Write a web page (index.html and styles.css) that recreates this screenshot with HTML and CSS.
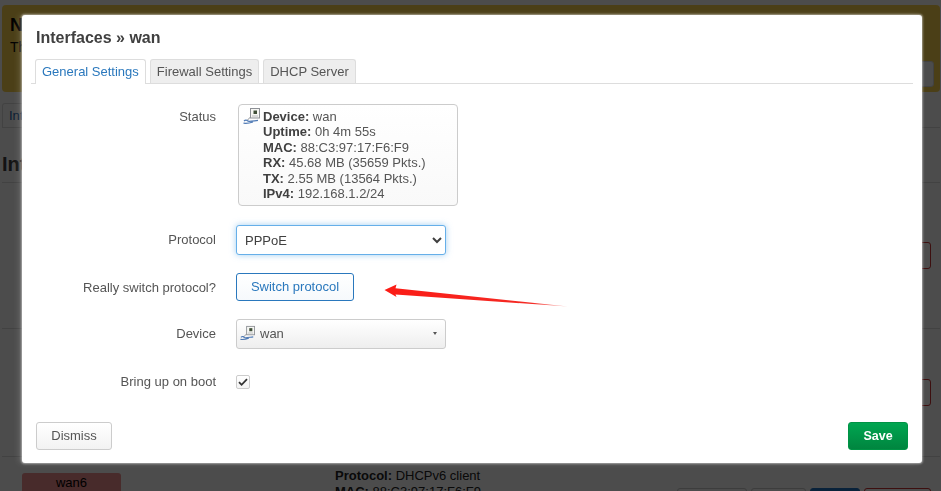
FILE: index.html
```html
<!DOCTYPE html>
<html lang="en">
<head>
<meta charset="utf-8">
<title>Interfaces » wan</title>
<link rel="stylesheet" href="styles.css">
</head>
<body>
<svg class="defs" width="0" height="0" aria-hidden="true">
  <symbol id="netdev" viewBox="0 0 17 16">
    <rect x="7.5" y="0.5" width="9" height="9.5" fill="#f6f6f3" stroke="#8d9095"/>
    <rect x="10.5" y="2.5" width="3.5" height="3.5" fill="#3f4f38"/>
    <rect x="9" y="7.5" width="6" height="1" fill="#b9bcc0"/>
    <path d="M7.5 9 4 12.5" fill="none" stroke="#8d9095" stroke-width="1"/>
    <path d="M1 13c1.500-1.500 3-1 4 .2 2 .5 5-.2 10-.8M.5 15.200c3 .4 6 0 9.500-1.200" fill="none" stroke="#4f7ab5" stroke-width="1.200"/>
  </symbol>
</svg>

<div class="page">
  <div class="alert">
    <div class="alert-text">
      <strong>Network device is not present</strong>
      <p>The interface configuration has changes.</p>
    </div>
    <button class="btn alert-btn" type="button">Continue</button>
  </div>
  <div class="page-tabs"><a class="page-tab">Interfaces</a></div>
  <h2 class="page-title">Interfaces</h2>
  <div class="if-row if-lan">
    <div class="badge badge-plain">lan</div>
    <div class="if-info"><b>Protocol:</b> Static address</div>
    <div class="if-actions">
      <button class="btn a-restart" type="button">Restart</button>
      <button class="btn a-stop" type="button">Stop</button>
      <button class="btn a-edit" type="button">Edit</button>
      <button class="btn a-delete" type="button">Delete</button>
    </div>
  </div>
  <div class="if-row if-wan">
    <div class="badge badge-red">wan</div>
    <div class="if-info"><b>Protocol:</b> DHCP client</div>
    <div class="if-actions">
      <button class="btn a-restart" type="button">Restart</button>
      <button class="btn a-stop" type="button">Stop</button>
      <button class="btn a-edit" type="button">Edit</button>
      <button class="btn a-delete" type="button">Delete</button>
    </div>
  </div>
  <div class="if-row if-wan6">
    <div class="badge badge-red">wan6</div>
    <div class="if-info"><b>Protocol:</b> DHCPv6 client<br><b>MAC:</b> 88:C3:97:17:F6:F9</div>
    <div class="if-actions">
      <button class="btn a-restart" type="button">Restart</button>
      <button class="btn a-stop" type="button">Stop</button>
      <button class="btn a-edit" type="button">Edit</button>
      <button class="btn a-delete" type="button">Delete</button>
    </div>
  </div>
</div>

<div class="overlay"></div>

<div class="modal">
  <h4 class="modal-title">Interfaces » wan</h4>
  <ul class="tabs">
    <li class="tab tab-active">General Settings</li>
    <li class="tab">Firewall Settings</li>
    <li class="tab">DHCP Server</li>
  </ul>
  <div class="form">
    <div class="field field-status">
      <div class="label label-top">Status</div>
      <div class="status">
        <svg class="status-icon"><use href="#netdev"/></svg>
        <div class="status-text">
          <b>Device:</b> wan<br>
          <b>Uptime:</b> 0h 4m 55s<br>
          <b>MAC:</b> 88:C3:97:17:F6:F9<br>
          <b>RX:</b> 45.68 MB (35659 Pkts.)<br>
          <b>TX:</b> 2.55 MB (13564 Pkts.)<br>
          <b>IPv4:</b> 192.168.1.2/24
        </div>
      </div>
    </div>
    <div class="field">
      <div class="label label-mid">Protocol</div>
      <select class="select"><option>PPPoE</option></select>
    </div>
    <div class="field">
      <div class="label">Really switch protocol?</div>
      <button class="btn btn-switch" type="button">Switch protocol</button>
    </div>
    <div class="field">
      <div class="label label-mid">Device</div>
      <div class="dropdown">
        <svg class="dropdown-icon"><use href="#netdev"/></svg>
        <span class="dropdown-text">wan</span>
        <span class="caret"></span>
      </div>
    </div>
    <div class="field field-check">
      <div class="label label-mid">Bring up on boot</div>
      <span class="check">
        <svg width="12" height="12" viewBox="0 0 12 12"><path d="M2 6.200 4.600 8.800 10 3.200" fill="none" stroke="#333" stroke-width="1.800"/></svg>
      </span>
    </div>
  </div>
  <div class="footer">
    <button class="btn btn-dismiss" type="button">Dismiss</button>
    <button class="btn btn-save" type="button">Save</button>
  </div>
</div>

<svg class="arrow" width="190" height="26" viewBox="0 0 190 26" aria-hidden="true">
  <defs>
    <linearGradient id="fade" x1="0" x2="1" y1="0" y2="0">
      <stop offset="0" stop-color="#fb1c16"/>
      <stop offset="0.8" stop-color="#f42a24"/>
      <stop offset="1" stop-color="#f9b0ac"/>
    </linearGradient>
  </defs>
  <path d="M0.500 7 12.500 1.500 11.500 5.200 184 23.500 11.500 11.400 12.500 14Z" fill="url(#fade)"/>
</svg>
</body>
</html>
```

FILE: styles.css
```css
* { box-sizing: border-box; }
html, body { margin: 0; height: 100%; overflow: hidden; }
body {
  background: #fff;
  color: #404040;
  font-family: "Liberation Sans", Arial, sans-serif;
  font-size: 13px;
  position: relative;
}
.defs { position: absolute; }

/* Background page */
.page { padding: 5px 1px 0 2px; width: 941px; }
.alert {
  height: 87px;
  background: #fbd34f;
  border-radius: 4px;
  display: flex;
  justify-content: space-between;
  align-items: flex-end;
  padding: 10px 6px 5px 8px;
}
.alert-text { align-self: flex-start; color: #000; font-size: 14px; }
.alert-text strong { font-size: 18px; line-height: 20px; display: block; }
.alert-text p { margin: 4px 0 0; line-height: 16px; }
.alert-btn { width: 90px; height: 26px; background: #fff; border: 1px solid #ddd; }
.page-tabs { margin-top: 11px; height: 25px; border-bottom: 1px solid #ddd; }
.page-tab {
  display: inline-block;
  height: 25px;
  line-height: 24px;
  padding: 0 8px 0 6px;
  color: #1e5fa8;
  border: 1px solid #ddd;
  border-bottom: 0;
  border-radius: 3px 3px 0 0;
}
.page-title {
  margin: 26px 0 0;
  height: 29px;
  line-height: 20px;
  font-size: 20px;
  font-weight: bold;
  color: #404040;
  border-bottom: 1px solid #ddd;
}
.if-row {
  display: flex;
  align-items: center;
  border-bottom: 1px solid #ddd;
  padding-left: 20px;
  padding-right: 9px;
}
.if-lan { height: 146px; }
.if-wan { height: 128px; }
.if-wan6 { height: 91px; border-bottom: 0; align-items: flex-start; }
.badge {
  width: 99px;
  height: 40px;
  border-radius: 3px;
  text-align: center;
  line-height: 19px;
  color: #000;
  flex: none;
}
.badge-plain { background: #90f090; }
.badge-red { background: #f08f8f; }
.if-wan6 .badge { margin-top: 16px; }
.if-info {
  margin-left: 214px;
  line-height: 16px;
  color: #222;
  flex: 1;
  font-size: 13px;
}
.if-wan6 .if-info { margin-top: 11px; }
.if-actions { display: flex; gap: 4px; }
.if-wan6 .if-actions { margin-top: 31px; }
.if-actions .btn { height: 27px; padding: 0; }
.a-restart { width: 70px; background: #fff; border: 1px solid #ccc; }
.a-stop { width: 55px; background: #fff; border: 1px solid #ccc; }
.a-edit { width: 50px; background: #1f72c4; border: 1px solid #1f72c4; color: #fff; }
.a-delete { width: 67px; background: #fff; border: 1px solid #c33; color: #c33; }

.overlay { position: fixed; inset: 0; background: rgba(0, 0, 0, 0.7); }

/* Modal */
.modal {
  position: absolute;
  left: 22px;
  top: 15px;
  width: 900px;
  height: 448px;
  background: #fff;
  border-radius: 3px;
  box-shadow: 0 0 2px 1px rgba(255, 255, 255, 0.45), -3px 0 6px rgba(255, 255, 255, 0.15);
  padding: 14px 14px 13px;
  display: flex;
  flex-direction: column;
}
.modal-title {
  margin: 0;
  font-size: 16px;
  line-height: 18px;
  font-weight: bold;
  color: #404040;
}
.tabs {
  list-style: none;
  margin: 12px -5px 0 -5px;
  padding: 0 0 0 4px;
  height: 25px;
  display: flex;
  gap: 4px;
  border-bottom: 1px solid #ddd;
}
.tab {
  height: 24px;
  padding: 0 6px;
  line-height: 24px;
  border: 1px solid #ddd;
  border-bottom: 0;
  border-radius: 3px 3px 0 0;
  background: #eee;
  color: #555;
  font-size: 13px;
}
.tab-active {
  height: 25px;
  background: #fff;
  color: #2a78bd;
}
.form {
  padding-top: 20px;
  display: flex;
  flex-direction: column;
  gap: 18px;
}
.field { display: flex; align-items: center; gap: 20px; min-height: 28px; }
.field-status { align-items: flex-start; margin-bottom: 1px; }
.field-check { height: 30px; }
.label { width: 180px; text-align: right; color: #555; flex: none; font-size: 13px; }
.label-top { padding-top: 5px; }
.label-mid { padding-bottom: 2px; }

.status {
  margin-left: 2px;
  width: 220px;
  height: 102px;
  border: 1px solid #ccc;
  border-radius: 4px;
  background: linear-gradient(#fff, #f9f9f9);
  padding: 3px 4px;
  display: flex;
  gap: 3px;
}
.status-icon { width: 17px; height: 16px; flex: none; }
.status-text { font-size: 13px; line-height: 15.4px; color: #555; white-space: nowrap; padding-top: 1px; }
.status-text b { color: #404040; }

.select {
  width: 210px;
  height: 30px;
  border: 1px solid #66afe9;
  border-radius: 3px;
  background: #fff;
  box-shadow: 0 0 6px rgba(102, 175, 233, 0.6);
  padding: 0 4px;
  color: #404040;
  font-family: "Liberation Sans", Arial, sans-serif;
  font-size: 13px;
  outline: none;
}
.btn {
  font-family: "Liberation Sans", Arial, sans-serif;
  font-size: 13px;
  border-radius: 3px;
  padding: 0;
}
.btn-switch {
  width: 118px;
  height: 28px;
  padding-bottom: 2px;
  background: linear-gradient(#fff, #f6f9fc);
  border: 1px solid #2a78bd;
  color: #2a78bd;
}
.dropdown {
  width: 210px;
  height: 30px;
  border: 1px solid #ccc;
  border-radius: 3px;
  background: linear-gradient(#fff, #eee);
  display: flex;
  align-items: center;
  padding: 0 8px 2px 3px;
  gap: 5px;
}
.dropdown-icon { width: 15px; height: 16px; flex: none; }
.dropdown-text { flex: 1; color: #555; font-size: 13px; }
.caret {
  width: 0;
  height: 0;
  border-left: 2.500px solid transparent;
  border-right: 2.500px solid transparent;
  border-top: 3px solid #555;
}
.check {
  width: 14px;
  height: 14px;
  border: 1px solid #ccc;
  border-radius: 2px;
  background: linear-gradient(#fff, #f4f4f4);
  display: flex;
  align-items: center;
  justify-content: center;
}
.footer {
  margin-top: auto;
  display: flex;
  justify-content: space-between;
}
.btn-dismiss {
  width: 76px;
  height: 28px;
  padding-bottom: 2px;
  background: linear-gradient(#fff, #f2f2f2);
  border: 1px solid #ccc;
  color: #555;
}
.btn-save {
  width: 60px;
  height: 28px;
  background: linear-gradient(#00a651, #00853f);
  border: 1px solid #009345;
  color: #fff;
  font-weight: bold;
  font-size: 12.500px;
}
.arrow { position: absolute; left: 384px; top: 283px; }
```
